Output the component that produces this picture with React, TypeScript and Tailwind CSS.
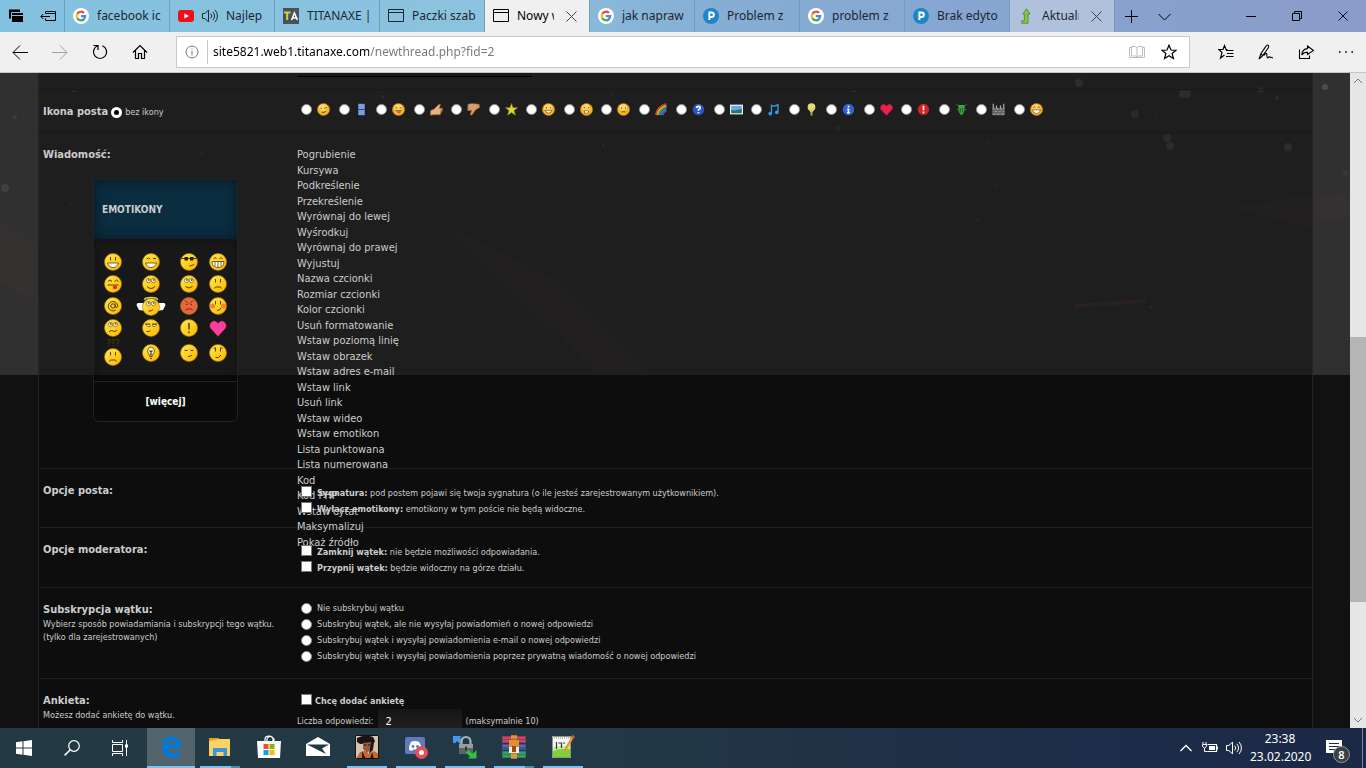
import type { ReactNode } from 'react';

type Box = { children: ReactNode; className?: string; box?: string };

function Svg({ children, className = 'size-4', box = '0 0 16 16' }: Box) {
  return (
    <svg viewBox={box} className={`${className} shrink-0`} fill="none" stroke="currentColor" aria-hidden="true">
      {children}
    </svg>
  );
}

/* ---------- browser icons ---------- */

function GoogleIcon() {
  return (
    <Svg>
      <circle cx="8" cy="8" r="8" fill="#fff" stroke="none" />
      <g strokeWidth="2.2">
        <path d="M4.3 5.8A4.3 4.3 0 0 1 11 4.9" stroke="#ea4335" />
        <path d="M4.3 10.2a4.4 4.4 0 0 1 0-4.4" stroke="#fbbc05" />
        <path d="M11 11.1a4.3 4.3 0 0 1-6.7-.9" stroke="#34a853" />
        <path d="M8 8.1h4.2a4.3 4.3 0 0 1-1.4 3.1" stroke="#4285f4" />
      </g>
    </Svg>
  );
}

function PIcon() {
  return (
    <Svg>
      <circle cx="8" cy="8" r="8" fill="#1d86c8" stroke="none" />
      <path d="M6.4 12V4.6h2.2a2.1 2.1 0 0 1 0 4.4H6.4" stroke="#fff" strokeWidth="2" />
    </Svg>
  );
}

function YoutubeIcon() {
  return (
    <Svg>
      <rect x="0" y="2" width="16" height="12" rx="3" fill="#f00f18" stroke="none" />
      <path d="M6.4 5.4v5.2L11 8z" fill="#fff" stroke="none" />
    </Svg>
  );
}

function TitanIcon() {
  return (
    <Svg>
      <rect width="16" height="16" fill="#45545c" stroke="none" />
      <path d="M1 4.5h6.5M4.2 4.5V12" stroke="#d8cf3c" strokeWidth="2" />
      <path d="M8.600 12l2.800-7 3 7M10 10h2.800" stroke="#fff" strokeWidth="1.600" />
    </Svg>
  );
}

function PageIcon() {
  return (
    <Svg>
      <path d="M.5 1.500h15v12H.5zM.5 4.500h15" />
    </Svg>
  );
}

function ArrowFavicon() {
  return (
    <Svg>
      <path d="M8.500.8L12 6h-2v9.200H3.800v-2.400h2.600V6H4.800z" fill="#8bc541" stroke="#4f7f2c" strokeWidth=".8" />
    </Svg>
  );
}

function SpeakerIcon({ className = 'size-4' }: { className?: string }) {
  return (
    <Svg className={className}>
      <path d="M.5 5.500h2.300L6.500 2.200v11.600L2.800 10.500H.5zM8.600 5.600a3.400 3.400 0 0 1 0 4.800M10.800 3.800a6 6 0 0 1 0 8.400M13 2a8.600 8.600 0 0 1 0 12" />
    </Svg>
  );
}

function CloseIcon({ className = 'size-[11px]' }: { className?: string }) {
  return (
    <Svg className={className} box="0 0 11 11">
      <path d="M.5.5l10 10M10.500.5l-10 10" />
    </Svg>
  );
}

/* ---------- tabs ---------- */

type Tab = { title: string; icon: ReactNode; state?: 'active' | 'hover'; sound?: boolean };

const tabs: Tab[] = [
  { title: 'facebook icon', icon: <GoogleIcon /> },
  { title: 'Najlep', icon: <YoutubeIcon />, sound: true },
  { title: 'TITANAXE | ', icon: <TitanIcon /> },
  { title: 'Paczki szab', icon: <PageIcon /> },
  { title: 'Nowy wątek', icon: <PageIcon />, state: 'active' },
  { title: 'jak napraw', icon: <GoogleIcon /> },
  { title: 'Problem z', icon: <PIcon /> },
  { title: 'problem z', icon: <GoogleIcon /> },
  { title: 'Brak edyto', icon: <PIcon /> },
  { title: 'Aktualności', icon: <ArrowFavicon />, state: 'hover' },
];

function TabStrip() {
  return (
    <div className="flex h-8 shrink-0 bg-[linear-gradient(90deg,#83c1e0_0%,#8cc3de_35%,#86aed4_52%,#86a4d0_75%,#8b9bc9_100%)] text-[#1b2733]">
      <div className="flex w-16 shrink-0 items-center gap-4 pl-2 text-black">
        <button aria-label="Odłożone karty">
          <Svg>
            <path d="M1 1.500h11v9H1z" fill="#000" stroke="none" />
            <path d="M3.500 4.500h12v10h-12z" fill="#000" stroke="#84c0df" />
            <path d="M4 7.500h11" stroke="#84c0df" />
          </Svg>
        </button>
        <button aria-label="Odłóż karty">
          <Svg>
            <path d="M5.500 5.500V3.500h10v9h-10v-2M5.500 5.500h10M10 8.500H.8M3.300 6L.8 8.500l2.500 2.500" />
          </Svg>
        </button>
      </div>
      {tabs.map((tab) => (
        <div
          key={tab.title}
          className={`flex w-[105px] shrink-0 items-center gap-2 border-l border-[#6f9dbd] pl-2 pr-2 text-[12px] ${
            tab.state === 'active' ? 'bg-[#f0f0f0] text-black' : tab.state === 'hover' ? 'bg-[#b0c1dd]' : ''
          }`}
        >
          {tab.icon}
          {tab.sound && <SpeakerIcon />}
          <button className="min-w-0 flex-1 overflow-hidden whitespace-nowrap text-left">{tab.title}</button>
          {tab.state && (
            <button aria-label="Zamknij kartę" className="mx-1 text-[#444]">
              <CloseIcon />
            </button>
          )}
        </div>
      ))}
      <div className="flex flex-1 items-center justify-between border-l border-[#7d92ba] text-black">
        <div className="flex items-center gap-5 pl-2.5">
          <button aria-label="Nowa karta">
            <Svg className="size-[13px]" box="0 0 13 13">
              <path d="M6.500 0v13M0 6.500h13" />
            </Svg>
          </button>
          <button aria-label="Podgląd kart">
            <Svg className="size-[13px]" box="0 0 13 13">
              <path d="M.5 4l6 6 6-6" />
            </Svg>
          </button>
        </div>
        <div className="flex items-center gap-9 pr-[18px]">
          <button aria-label="Minimalizuj">
            <Svg className="size-[10px]" box="0 0 10 10">
              <path d="M0 5.500h10" />
            </Svg>
          </button>
          <button aria-label="Przywróć">
            <Svg className="size-[10px]" box="0 0 10 10">
              <path d="M.5 2.500h7v7h-7zM2.500 2.500v-2h7v7h-2" />
            </Svg>
          </button>
          <button aria-label="Zamknij">
            <CloseIcon className="size-[10px]" />
          </button>
        </div>
      </div>
    </div>
  );
}

function Toolbar() {
  return (
    <div className="flex h-[41px] shrink-0 items-center border-b border-[#c4c4c4] bg-[#f0f0f0] text-black">
      <div className="flex w-[176px] shrink-0 items-center gap-6 pl-3">
        <button aria-label="Wstecz">
          <Svg><path d="M16 8.500H1M8 1.500l-7 7 7 7" /></Svg>
        </button>
        <button aria-label="Dalej" className="text-[#a0a0a0]">
          <Svg><path d="M0 8.500h15M8 1.500l7 7-7 7" /></Svg>
        </button>
        <button aria-label="Odśwież">
          <Svg><path d="M5.500 1.800A6.600 6.600 0 1 0 10.300 1.700M1.500 1.500h4.500v4.500" strokeWidth="1.200" /></Svg>
        </button>
        <button aria-label="Strona główna">
          <Svg><path d="M1 8.500l7-7 7 7M3.500 6.500v8h3v-5h3v5h3v-8" strokeWidth="1.200" /></Svg>
        </button>
      </div>
      <div className="flex h-8 flex-1 items-center border border-[#c8c8c8] bg-white pl-2 pr-3">
        <Svg className="size-[14px] text-[#777]" box="0 0 14 14">
          <circle cx="7" cy="7" r="6" />
          <path d="M7 6v4.500M7 3.500v1.200" />
        </Svg>
        <div className="ml-2 h-6 w-px bg-[#c4c4c4]" />
        <input
          type="text"
          aria-label="Adres"
          defaultValue="site5821.web1.titanaxe.com/newthread.php?fid=2"
          className="ml-[5px] min-w-0 flex-1 bg-[linear-gradient(90deg,#000_156px,#767676_156px)] bg-clip-text text-[12px] text-transparent outline-none"
        />
        <button aria-label="Widok do czytania" className="text-[#bdbdbd]">
          <Svg><path d="M2.500 3.500h-2v10h15v-10h-2M2.500 2.500h4l1.500 1 1.500-1h4v9.500h-4l-1.500 1-1.500-1h-4zM8 3.500v9.500" /></Svg>
        </button>
        <button aria-label="Dodaj do ulubionych" className="ml-4">
          <Svg><path d="M8 1.200l2 4.800 5 .3-3.900 3.200 1.300 5L8 11.800l-4.400 2.700 1.300-5L1 6.300 6 6z" strokeWidth="1.200" /></Svg>
        </button>
      </div>
      <div className="flex items-center gap-6 pl-7 pr-3">
        <button aria-label="Ulubione">
          <Svg><path d="M9.500 5.500H8L6.500 1.500 5 5.500H.8l3.200 3-1.500 5.500 4-3M8 6.500h7.500M9 9.500h6.500M8 12.500h7.500" strokeWidth="1.100" /></Svg>
        </button>
        <button aria-label="Dodaj notatki">
          <Svg><path d="M1 15L3 9.500 8 2.200q1.800-2 2.500-.5T9.500 5L4.500 11.800 1 15M3 9.500l1.500 2.300M6 11.500q3-4 2.800-1t1 3.500q1-1.500 2.200-1t3 1" strokeWidth="1.100" /></Svg>
        </button>
        <button aria-label="Udostępnij">
          <Svg><path d="M1.500 5.500v9h10v-3M9.500 2l6 4.500-6 4V8.200Q5.500 8 3.800 11 4 5 9.500 4.600z" strokeWidth="1.100" /></Svg>
        </button>
        <button aria-label="Więcej">
          <Svg>
            <path d="M1 8h1.600M7.200 8h1.600M13.400 8H15" strokeWidth="1.600" />
          </Svg>
        </button>
      </div>
    </div>
  );
}

/* ---------- post icons ---------- */

const radioClass =
  'size-[11px] shrink-0 appearance-none rounded-full border border-[#8a8a8a] bg-white checked:border-[3px] checked:border-white checked:bg-black';
const checkClass =
  'mb-1 size-[11px] shrink-0 appearance-none border border-[#767676] bg-white checked:bg-[#0078d7]';

function Gold({ children }: { children: ReactNode }) {
  return (
    <>
      <circle cx="8" cy="8" r="7.500" fill="#f5b52e" stroke="#b87710" strokeWidth=".8" />
      <ellipse cx="7.500" cy="5.500" rx="5" ry="4" fill="#fbd66b" stroke="none" />
      <g stroke="#6b3f08" strokeWidth="1.100">{children}</g>
    </>
  );
}

function Badge({ color, mark }: { color: string; mark: string }) {
  return (
    <>
      <circle cx="8" cy="8" r="7" fill={color} stroke="none" />
      <path d={mark} stroke="#fff" strokeWidth="2" />
    </>
  );
}

const postIcons: { name: string; art: ReactNode }[] = [
  { name: 'Mrugnięcie', art: <Gold><path d="M5 6v1.500M9 6.500l3-1M6 11.500q3 1 5-1.500" /></Gold> },
  { name: 'Film', art: <><path d="M2.500 1v14M13.500 1v14" stroke="#141c30" strokeWidth="3" strokeDasharray="2 1" /><path d="M4 1h8v14H4z" fill="#7c9ddc" stroke="none" /><path d="M4 8h8" stroke="#26355e" /></> },
  { name: 'Język', art: <Gold><path d="M4.500 6h2M9.500 6h2M4.500 9.500h7" /><path d="M6.500 10h4v2q-2 2-4 0z" fill="#e75454" stroke="none" /></Gold> },
  { name: 'Kciuk w górę', art: <path d="M.5 9.500l5-2.500L11 1.500 13 2l-1.500 4.500h4v2h-2.500l2 .5v1.500l-2 .2 1 1.300-1.500 1 .5 1.500H5l-4.500.5z" fill="#e9b27d" stroke="#8e5a34" strokeWidth=".7" /> },
  { name: 'Kciuk w dół', art: <path d="M1 1.500L6 .5l9 1 .5 4-5 3L6 15l-2-.5 1.500-5.500-4.500.5L.5 7l1.500-.5L.3 5l1-1z" fill="#d99b6c" stroke="#8e5a34" strokeWidth=".7" /> },
  { name: 'Gwiazda', art: <path d="M8 .5l1.800 5.300H15.500l-4.500 3.400 1.800 5.800L8 11.600 3.200 15 5 9.200.5 5.800h5.700z" fill="#dcdc28" stroke="#8f8a16" strokeWidth=".7" /> },
  { name: 'Uśmiech', art: <Gold><path d="M5.500 5v1.500M10.500 5v1.500" /><path d="M4 9h8q-1 3.500-4 3.500T4 9z" fill="#fff" strokeWidth=".8" /></Gold> },
  { name: 'Szok', art: <Gold><path d="M4.500 5l2 1.500M11.500 5l-2 1.500" /><path d="M5.500 9.500h5v3h-5z" fill="#fff" strokeWidth=".8" /></Gold> },
  { name: 'Smutny', art: <Gold><path d="M5.500 5.500v1.500M10.500 5.500v1.500M5.500 11q2.500-.8 5 0" /></Gold> },
  { name: 'Tęcza', art: <g strokeWidth="1.900"><path d="M1 15Q2 4 14 1" stroke="#d63a2f" /><path d="M3 15Q4 6 14 3" stroke="#e9b92c" /><path d="M5 15Q6 8 14 5" stroke="#3dae4a" /><path d="M7 15Q8 10 14 7" stroke="#3c79d8" /><path d="M9 15q1-3 5-6" stroke="#8249b5" /></g> },
  { name: 'Pytanie', art: <Badge color="#2c54cf" mark="M5.800 6.200q0-2 2.200-2t2.200 1.800Q10.200 7.500 8 8v1.500M8 11v1.500" /> },
  { name: 'Obraz', art: <><rect x="0" y="2" width="16" height="12" fill="#eef2f4" stroke="none" /><path d="M1.500 3.500h13v5h-13z" fill="#62aae8" stroke="none" /><path d="M1.500 8q5 2 13-1v5.500h-13z" fill="#2e6e72" stroke="none" /></> },
  { name: 'Muzyka', art: <><path d="M5.500 12.500V3q3 2 8-1v9" stroke="#2e9ae8" strokeWidth="1.700" /><circle cx="4" cy="13" r="2.300" fill="#2e9ae8" stroke="none" /><circle cx="12" cy="11.500" r="2.300" fill="#2e9ae8" stroke="none" /></> },
  { name: 'Żarówka', art: <><circle cx="8" cy="5" r="4.800" fill="#e7d97a" stroke="none" /><path d="M5 8h6l-1.500 3.500h-3z" fill="#d9cb64" stroke="none" /><path d="M8 11v4.500" stroke="#a8a05a" strokeWidth="2.500" /></> },
  { name: 'Informacja', art: <Badge color="#3560d6" mark="M8 3.500v2M8 7v5.500M6.500 7.800H8M6.300 12h3.400" /> },
  { name: 'Serce', art: <path d="M8 15.500L.5 7.500C-1 3.500 4.500-1.500 8 4c3.500-5.500 9-.5 7.500 3.500z" fill="#e5234a" stroke="#9c1030" strokeWidth=".6" /> },
  { name: 'Wykrzyknik', art: <Badge color="#d02424" mark="M8 3.500v5.500M8 10.500v2" /> },
  { name: 'Robak', art: <><path d="M4 2.500h8l-.5 8.500L8 15.500 4.500 11z" fill="#38a846" stroke="none" /><path d="M1.500 1.500l3 2.500M14.500 1.500l-3 2.500M2 8l3-.5M14 8l-3-.5" stroke="#2b8a38" /><path d="M6.500 6v6M9.500 6v6" stroke="#164a1e" /></> },
  { name: 'Mur', art: <><path d="M.5 6h15v9H.5z" fill="#8c8c8c" stroke="none" /><path d="M1.500 1v5M5.500 3v3M10.500 3v3M14.500 1v5" stroke="#a9a9a9" strokeWidth="1.500" /><path d="M0 9h16M0 12h16M4 6v3M9 6v3M13 6v3M2 9v3M7 9v3M12 9v3M5 12v3M10 12v3" stroke="#444" strokeWidth=".8" /></> },
  { name: 'Szeroki uśmiech', art: <Gold><path d="M4 5.500q1.200-1.500 2.500 0M9.500 5.500q1.200-1.500 2.500 0" /><path d="M3 8.500h10q-1 4.500-5 4.500T3 8.500z" fill="#fff" strokeWidth=".8" /></Gold> },
];

/* ---------- emoticons ---------- */

function Face({ children, color = 'url(#face)' }: { children: ReactNode; color?: string }) {
  return (
    <>
      <circle cx="9" cy="9" r="8.500" fill={color} stroke="#a87c0a" strokeWidth=".6" />
      <g stroke="#5b4204">{children}</g>
    </>
  );
}

const eyes = 'M6.500 4v3.500M11.500 4v3.500';
const roundEyes = (
  <g fill="#fff" strokeWidth=".6">
    <circle cx="6.500" cy="5.500" r="2.100" />
    <circle cx="11.500" cy="5.500" r="2.100" />
    <path d="M6 5h1.500M11 5h1.500" strokeWidth="1.300" />
  </g>
);

const emoticons: { name: string; art: ReactNode; kind?: 'angel' | 'confused' }[] = [
  { name: 'uśmiech', art: <Face><path d={eyes} /><path d="M3.500 10h11q-1.500 4.500-5.500 4.500t-5.500-4.500z" fill="#fff" strokeWidth=".8" /></Face> },
  { name: 'oczko', art: <Face><path d="M4.500 6l2-1 1.500 1M11 5.500h3" /><path d="M3.500 10h11q-1.500 4.500-5.500 4.500t-5.500-4.500z" fill="#fff" strokeWidth=".8" /></Face> },
  { name: 'luz', art: <Face><path d="M0 5.500h18M9.500 13q3 0 4.500-2" /><path d="M4.500 4H8v3.500H4.500zM10 4h3.500v3.500H10z" fill="#28220a" stroke="none" /></Face> },
  { name: 'szeroki uśmiech', art: <Face><path d="M4.500 5.500q1.500-1.500 3 0M10.500 5.500q1.500-1.500 3 0" /><path d="M3 8.500h12q0 6-6 6t-6-6zM6 8.500v5M9 8.500v6M12 8.500v5" fill="#fff" strokeWidth=".8" /></Face> },
  { name: 'język', art: <Face><path d="M4 6.500l2-1.500 2 1.500M10.500 6.500l2-1.500 2 1.500M3.500 10h11" /><path d="M9 10.500h4v3q-2 1.500-4 0z" fill="#dc3838" stroke="none" /></Face> },
  { name: 'przewraca oczami', art: <Face>{roundEyes}<path d="M5 11.500q4 4 8 0" /></Face> },
  { name: 'nieśmiały', art: <Face>{roundEyes}<path d="M5.500 11.500q3.500 3 7 0" /></Face> },
  { name: 'smutny', art: <Face><path d={eyes} /><path d="M5.500 13.500l1-1.500h5l1 1.500" /></Face> },
  { name: 'małpa', art: <Face><circle cx="9" cy="9" r="2.200" /><path d="M11.200 6.500v3.500q2 1.500 2.500-1A4.700 4.700 0 1 0 11.800 13" /></Face> },
  {
    name: 'anioł',
    kind: 'angel',
    art: (
      <>
        <path d="M7 7H1.500L.5 9l1.500 3 1 2 3 .5h2zM23 7h5.500l1 2-1.500 3-1 2-3 .5h-2z" fill="#fff" stroke="none" />
        <g transform="translate(6 2)"><Face>{roundEyes}<path d="M6.500 13q3 .5 4.500-1.500" /></Face></g>
        <path d="M8.500 4q0-2.500 6.500-2.500T21.500 4" stroke="#e0c35e" strokeWidth="1.600" />
      </>
    ),
  },
  { name: 'zły', art: <Face color="#e8663f"><g stroke="#8c2412"><path d="M5 3.500l3 3M13 3.500l-3 3M6 7.500h1.500M10.500 7.500H12M5.500 13.500l1-1.500h5l1 1.500" /></g></Face> },
  { name: 'zawstydzony', art: <Face><circle cx="3.500" cy="9" r="2.500" fill="#f5842a" stroke="none" /><circle cx="14.500" cy="9" r="2.500" fill="#f5842a" stroke="none" /><path d={eyes} /><path d="M8 13.500q3 0 4-2.500" /></Face> },
  { name: 'zmieszany', art: <Face>{roundEyes}<path d="M5 13q2-2.500 4-1t4-1" /></Face> },
  { name: 'podejrzliwy', art: <Face><path d="M3 5h5M10 5h5" /><path d="M4 5.500h4v2H5.500zM10.500 5.500h4l-1.500 2h-2z" fill="#fff" strokeWidth=".7" /><path d="M4.500 12.500h3l1-1" /></Face> },
  { name: 'wykrzyknik', art: <Face><path d="M9 4v6.500M9 12.500v1.600" strokeWidth="1.600" /></Face> },
  { name: 'serce', art: <path d="M9 17.500L1.300 9C-1 4.500 5-1.500 9 4.500c4-6 10 0 7.700 4.500z" fill="#ff3d9e" stroke="#8f1d58" strokeWidth=".5" /> },
  { name: 'pytanie', kind: 'confused', art: <Face><path d={eyes} /><path d="M5.500 13.500l1-1.500h5l1 1.500" /></Face> },
  { name: 'pomysł', art: <Face><path d="M9 3a4 4 0 0 1 2 7v1H7v-1a4 4 0 0 1 2-7z" fill="#fffad0" strokeWidth=".8" /><path d="M7.500 6.500L9 8l1.500-1.500M9 8v3M7.500 12.500h3M8 14.500h2" strokeWidth="1.200" /></Face> },
  { name: 'śpiący', art: <Face><path d="M4.500 6q1.500 1.500 3 0M10.500 6q1.500 1.500 3 0M8 12.500q2.500 0 4-1.500" /></Face> },
  { name: 'niezdecydowany', art: <Face><path d={eyes} /><path d="M4.500 4.500l2-1M13.500 4.500l-2-1M6.500 13.500h3l2.500-2.500" /></Face> },
];

function EmoticonPanel() {
  return (
    <div className="ml-[50px] mt-4 w-[145px] rounded-b-md border border-[#222] bg-black/20">
      <div className="flex h-[59px] items-center bg-[#0b2d40] px-2 text-[10px] font-bold text-[#c8ccce] shadow-[inset_0_0_14px_rgba(0,0,0,0.45)]">
        EMOTIKONY
      </div>
      <div className="grid h-[142px] grid-cols-[38px_38px_38px_20px] grid-rows-[22px_22px_22px_22px_28px] place-items-center pt-3 shadow-[inset_0_0_10px_rgba(0,0,0,0.3)]">
        {emoticons.map((e) => (
          <button key={e.name} aria-label={e.name} className="flex flex-col items-center">
            {e.kind === 'confused' && <span className="h-2 text-[9px] leading-[6px] text-[#54400e]">???</span>}
            {e.kind === 'angel' ? (
              <Svg className="h-[20px] w-[30px]" box="0 0 30 20">{e.art}</Svg>
            ) : (
              <Svg className="size-[18px]" box="0 0 18 18">{e.art}</Svg>
            )}
          </button>
        ))}
      </div>
      <div className="flex h-10 items-center justify-center border-t border-[#222] text-[10px] font-bold text-white">
        <a href="#wiecej">[więcej]</a>
      </div>
    </div>
  );
}

/* ---------- form ---------- */

const editorCommands = [
  'Pogrubienie', 'Kursywa', 'Podkreślenie', 'Przekreślenie', 'Wyrównaj do lewej', 'Wyśrodkuj',
  'Wyrównaj do prawej', 'Wyjustuj', 'Nazwa czcionki', 'Rozmiar czcionki', 'Kolor czcionki',
  'Usuń formatowanie', 'Wstaw poziomą linię', 'Wstaw obrazek', 'Wstaw adres e-mail', 'Wstaw link',
  'Usuń link', 'Wstaw wideo', 'Wstaw emotikon', 'Lista punktowana', 'Lista numerowana', 'Kod',
  'Kod PHP', 'Wstaw cytat', 'Maksymalizuj', 'Pokaż źródło',
];

const subscriptions = [
  'Nie subskrybuj wątku',
  'Subskrybuj wątek, ale nie wysyłaj powiadomień o nowej odpowiedzi',
  'Subskrybuj wątek i wysyłaj powiadomienia e-mail o nowej odpowiedzi',
  'Subskrybuj wątek i wysyłaj powiadomienia poprzez prywatną wiadomość o nowej odpowiedzi',
];

function Row({
  label,
  height,
  line = 'border-[#1f1f1f]',
  children,
}: {
  label: ReactNode;
  height: string;
  line?: string;
  children: ReactNode;
}) {
  return (
    <div className={`grid grid-cols-[254px_1fr] border-t px-1 ${line} ${height}`}>
      <div className="pt-[14px] text-[11px] leading-4">{label}</div>
      <div className="text-[9px] leading-4">{children}</div>
    </div>
  );
}

function Check({ title, text }: { title: string; text: string }) {
  return (
    <label className="flex w-fit items-center gap-[5px] pl-1">
      <input type="checkbox" className={checkClass} />
      <span><b>{title}</b> {text}</span>
    </label>
  );
}

const sparks = [
  [15, 44, 2, '#4a3a20'], [74, 18, 2, '#30281c'], [383, 24, 2, '#33291b'], [854, 18, 2, '#33291b'], [611, 22, 2, '#1f262c'],
  [1079, 10, 4, '#2c2c2c'], [1183, 21, 4, '#2c2c2c'], [1187, 21, 4, '#2c2c2c'], [1135, 41, 4, '#2a2a2a'], [1167, 65, 4, '#2c2c2c'],
  [1170, 73, 4, '#2c2c2c'], [1288, 74, 4, '#2c2c2c'], [1261, 17, 3, '#282b29'], [1277, 25, 2, '#282b29'], [1325, 14, 3, '#454f51'],
  [603, 72, 1, '#3a2b1a'], [1155, 41, 1, '#3b2818'], [202, 80, 2, '#2a2219'], [989, 69, 2, '#2c2119'], [996, 112, 2, '#2a201a'],
  [978, 146, 2, '#2c2318'], [612, 147, 2, '#2a1d1b'], [503, 220, 2, '#291f1a'], [856, 238, 2, '#261f1a'], [1151, 234, 2, '#35221a'],
  [5, 115, 4, '#3b4142'], [70, 130, 2, '#29231e'], [838, 55, 3, '#222525'], [1345, 100, 3, '#393636'],
] as const;

function Backdrop() {
  return (
    <svg className="absolute inset-x-0 top-0 h-[302px] w-full" viewBox="0 0 1350 302" preserveAspectRatio="none" fill="none" aria-hidden="true">
      <path d="M1313 125l37-5v25h-37zM0 150l38 20v60l-38-20z" fill="#353131" />
      <path d="M1228 135l84-14v34zM440 150l120 60 90 92h-50L480 190z" fill="#211f1f" />
      {sparks.map(([x, y, r, color]) => (
        <circle key={`${x}-${y}`} cx={x} cy={y} r={r} fill={color} />
      ))}
      <path d="M1074 231l72-5v4l-72 5z" fill="#282021" />
      <g stroke="#221f1f">
        <path d="M1060 302q-55-35-60-58t22-28M990 302q-35-25-40-40M960 168l90-20M1040 145l118-20M1166 254l100-6M160 85l-5 20 90-40 95 15-60 10M400 150L560 302M470 140L640 302M350 120l300-20 420 90" />
      </g>
    </svg>
  );
}

function Forum() {
  return (
    <main className="relative flex-1 overflow-hidden bg-[linear-gradient(#303030_302px,#111_302px)] font-['DejaVu_Sans_Condensed','DejaVu_Sans',sans-serif] text-[#ccc]">
      <div className="ml-[38px] mr-[37px] h-full border-x border-[#252525] bg-[linear-gradient(#1e1e1e_302px,#0d0d0d_302px)]">
        <Backdrop />
        <form className="relative">
          <div className="h-4 px-1">
            <div className="ml-[254px] h-1 w-[235px] border-b border-black bg-[#1a1a1a]" />
          </div>
          <Row
            height="h-[43px]"
            line="border-[#191919]"
            label={
              <div className="flex items-center gap-[3px]">
                <b>Ikona posta</b>
                <label className="flex items-center gap-[3px] text-[9px]">
                  <input type="radio" name="icon" defaultChecked className={radioClass} />
                  bez ikony
                </label>
              </div>
            }
          >
            <div className="grid w-[754px] grid-cols-20 pl-1 pt-[13px]">
              {postIcons.map((icon) => (
                <label key={icon.name} className="flex items-center gap-[5px]">
                  <input type="radio" name="icon" aria-label={icon.name} className={radioClass} />
                  <Svg className="size-[13px]">{icon.art}</Svg>
                </label>
              ))}
            </div>
          </Row>
          <Row height="h-[336px]" line="border-[#191919]" label={<><b>Wiadomość:</b><EmoticonPanel /></>}>
            <ul className="mt-[14px] flex h-[403px] flex-col justify-between text-[11px] leading-[15px]">
              {editorCommands.map((c) => (
                <li key={c}>{c}</li>
              ))}
            </ul>
          </Row>
          <Row height="h-[59px]" label={<b>Opcje posta:</b>}>
            <div className="pt-4">
              <Check title="Sygnatura:" text="pod postem pojawi się twoja sygnatura (o ile jesteś zarejestrowanym użytkownikiem)." />
              <Check title="Wyłącz emotikony:" text="emotikony w tym poście nie będą widoczne." />
            </div>
          </Row>
          <Row height="h-[60px]" label={<b>Opcje moderatora:</b>}>
            <div className="pt-4">
              <Check title="Zamknij wątek:" text="nie będzie możliwości odpowiadania." />
              <Check title="Przypnij wątek:" text="będzie widoczny na górze działu." />
            </div>
          </Row>
          <Row
            height="h-[91px]"
            label={
              <>
                <b>Subskrypcja wątku:</b>
                <p className="whitespace-nowrap text-[9px] leading-[13px]">
                  Wybierz sposób powiadamiania i subskrypcji tego wątku.
                  <br />
                  (tylko dla zarejestrowanych)
                </p>
              </>
            }
          >
            <div className="pt-3">
              {subscriptions.map((s) => (
                <label key={s} className="flex w-fit items-center gap-[5px] pl-1">
                  <input type="radio" name="subscription" className={radioClass} />
                  {s}
                </label>
              ))}
            </div>
          </Row>
          <Row
            height="h-[91px]"
            label={
              <>
                <b>Ankieta:</b>
                <p className="text-[9px] leading-[13px]">Możesz dodać ankietę do wątku.</p>
              </>
            }
          >
            <div className="pt-[14px]">
              <label className="flex w-fit items-center gap-[3px] pl-1 font-bold">
                <input type="checkbox" className={checkClass} />
                Chcę dodać ankietę
              </label>
              <div className="flex items-center gap-1">
                <label htmlFor="answers">Liczba odpowiedzi:</label>
                <input
                  id="answers"
                  type="text"
                  defaultValue="2"
                  className="h-6 w-[84px] bg-[linear-gradient(#161616,#222)] px-2 text-[11px] text-white outline-none"
                />
                (maksymalnie 10)
              </div>
            </div>
          </Row>
        </form>
      </div>
    </main>
  );
}

function Scrollbar() {
  return (
    <div className="flex w-4 shrink-0 flex-col bg-[#e6e6e6] text-[#777]" aria-hidden="true">
      <div className="flex h-4 items-center justify-center">
        <Svg className="size-2" box="0 0 8 8"><path d="M0 6l4-4 4 4" /></Svg>
      </div>
      <div className="flex flex-1 flex-col">
        <div className="flex-[248]" />
        <div className="flex-[264] bg-[#b5b5b5]" />
        <div className="flex-[110]" />
      </div>
      <div className="flex h-4 items-center justify-center">
        <Svg className="size-2" box="0 0 8 8"><path d="M0 2l4 4 4-4" /></Svg>
      </div>
    </div>
  );
}

/* ---------- taskbar ---------- */

type App = { name: string; art: ReactNode; mark?: 'active' | 'open' | 'many' };

const apps: App[] = [
  {
    name: 'Microsoft Edge',
    mark: 'active',
    art: <path d="M1.500 11C3 4.500 7.500 1.500 12.500 1.500c6.500 0 9.500 4.500 9.500 9.500v2.500H8.500c.3 3.500 3.500 4.800 6.500 4.800 2.300 0 4.300-.6 6-1.700v4.700c-2 1.200-4.500 1.700-7.300 1.700C8 23 3.500 19.500 3.500 14c0-3.500 1.800-6 4.600-7.500C5.500 7 3 8.500 1.500 11zM8.700 9.500h7.600c0-2.500-1.500-4-3.600-4-2.300 0-3.700 1.700-4 4z" fill="#0078d7" fillRule="evenodd" stroke="none" />,
  },
  {
    name: 'Eksplorator plików',
    mark: 'many',
    art: <g stroke="none"><path d="M1 3h10v4H1z" fill="#e2a10e" /><path d="M1 6l10-2h11v17H1z" fill="#fbd263" /><path d="M5 21v-8h14v8h-3.500v-4h-7v4z" fill="#3a97dd" /></g>,
  },
  {
    name: 'Microsoft Store',
    art: <g stroke="none"><path d="M0 6h24l-1 17H1z" fill="#fff" /><path d="M8 6V4q0-3 4-3t4 3v2M10 6V3.500Q13-1 17 4v2" fill="none" stroke="#fff" strokeWidth="1.200" /><path d="M6.500 9H11.500v5h-5z" fill="#f25022" /><path d="M12.500 9h5v5h-5z" fill="#7fba00" /><path d="M6.500 15h5v5h-5z" fill="#00a4ef" /><path d="M12.500 15h5v5h-5z" fill="#ffb900" /></g>,
  },
  {
    name: 'Poczta',
    art: <path d="M0 9l12-7 12 7v12H0zM1 9.500l11 5.500 8 4-4-5.500 7-4z" fill="#fff" fillRule="evenodd" stroke="none" />,
  },
  {
    name: 'San Andreas Multiplayer',
    mark: 'open',
    art: <g stroke="none"><path d="M0 0h24v24H0z" fill="#d8c3b1" /><path d="M2 3Q10-1 18 2l2 4-1 2-14 1-3-2z" fill="#191411" /><path d="M8 8l8-1v7l-4 4-4-4z" fill="#9c5b36" /><path d="M16 6l3 1-1 8-4 4 1-6z" fill="#241a15" /><path d="M1 24l4-7 5-1 4 3 5-3 5 3v5z" fill="#c46a32" /><path d="M7 16l4 8H7zM17 17l-2 7h4z" fill="#2b1b13" /><path d="M9 10h2.500M13 10h2" stroke="#1a0f09" /><path d="M.5.5h23v23H.5z" fill="none" stroke="#15110e" /></g>,
  },
  {
    name: 'Discord',
    mark: 'open',
    art: <g stroke="none"><path d="M3 2h16q2 0 2 2v17l-3-2H3q-2 0-2-2V4q0-2 2-2z" fill="#6379bd" /><path d="M7 7q4-2 8 0 3 4 2 8l-3 1-1-1.500H9L8 16l-3-1q0-5 2-8z" fill="#fff" /><circle cx="9" cy="11.500" r="1.400" fill="#6379bd" /><circle cx="13.500" cy="11.500" r="1.400" fill="#6379bd" /><circle cx="17.500" cy="17.500" r="6.500" fill="#e4505a" /><circle cx="17.500" cy="17.500" r="2.500" fill="#fff" /></g>,
  },
  {
    name: 'WinSCP',
    mark: 'open',
    art: <g stroke="none"><path d="M0 1h8.500L7 3l3 3-3 3-3-3-2 2.500-2-1z" fill="#3f9af0" /><path d="M8.500 10V7q0-5 4.500-5t4.500 5v3" fill="none" stroke="#a9afb2" strokeWidth="2.200" /><path d="M6 9h14v10H6z" fill="#5f6567" /><path d="M6 9h14v4H6z" fill="#989ea0" /><path d="M12 11.500h2v4h-2z" fill="#333" /><path d="M23.500 23.500H15l2-2-4-4 2.500-2.500 4 4 4-4z" fill="#2fc33c" /></g>,
  },
  {
    name: 'WinRAR',
    mark: 'many',
    art: <g stroke="none"><path d="M0 1h24v7H0z" fill="#b32f52" /><path d="M0 9h24v6H0z" fill="#3f4e9d" /><path d="M0 16h24v7H0z" fill="#1e8a4e" /><path d="M1 3h22M1 6h22M1 11h22M1 18h22M1 21h22" stroke="#d9d3cf" strokeOpacity=".4" /><path d="M9 0h6v24H9z" fill="#c8721e" /><path d="M7 5h10v7H7z" fill="#e0912e" /><path d="M7 12h10v6H7z" fill="#f5ece0" /><path d="M10 11h4v6h-4z" fill="#9a4c14" /><path d="M9 2h6M9 20h6M9 22h6" stroke="#f0c36a" /></g>,
  },
  {
    name: 'Notatnik',
    mark: 'open',
    art: <g stroke="none"><path d="M1 1h19v22H1z" fill="#f6f8f2" /><path d="M2 15q9-3 17-2v9H2z" fill="#7ad437" /><path d="M2 12q9-2 17-1v3q-9-1-17 2z" fill="#c9ecac" /><path d="M1.500 1.500h18v21h-18z" fill="none" stroke="#8b9488" /><path d="M3 3h15" stroke="#888" strokeDasharray="1 1" /><path d="M5.500 7v7M7.500 8h3v5M12 8h2" fill="none" stroke="#333" strokeWidth="1.200" /><path d="M20.500 1.500l2 1.500-8 14-2.500 2 .5-3.500z" fill="#e59a2b" /><path d="M20 1.500l1.500-1.500L24 1.500 23 3.500z" fill="#dc5348" /></g>,
  },
];

function Taskbar() {
  return (
    <footer className="flex h-10 shrink-0 bg-[linear-gradient(90deg,#233a44_0%,#223845_45%,#1d2c48_80%,#1b2946_100%)] text-white">
      <button aria-label="Start" className="flex w-12 shrink-0 items-center justify-center">
        <Svg><path d="M0 2.200l6.500-.9v6.200H0zM7.500 1.200L16 0v7.500H7.500zM0 8.500h6.500v6.200L0 13.800zM7.500 8.500H16V16l-8.500-1.200z" fill="#fff" stroke="none" /></Svg>
      </button>
      <button aria-label="Wyszukaj" className="flex w-12 shrink-0 items-center justify-center">
        <Svg className="size-4"><circle cx="10" cy="6" r="5.300" strokeWidth="1.200" /><path d="M6.300 9.700L.6 15.400" strokeWidth="1.500" /></Svg>
      </button>
      <button aria-label="Widok zadań" className="mr-[3px] flex w-12 shrink-0 items-center justify-center">
        <Svg><path d="M.5 0v2.500h10V0M.5 4.500h10v7H.5zM.5 16v-2.500h10V16M14.500 0v16" /><path d="M13 4.500h3v3h-3z" fill="#fff" stroke="none" /></Svg>
      </button>
      <div className="flex flex-1 gap-px">
        {apps.map((app) => (
          <button
            key={app.name}
            aria-label={app.name}
            className={`flex w-12 shrink-0 flex-col items-center ${app.mark === 'active' ? 'bg-[#51636b]' : ''}`}
          >
            <span className="flex flex-1 items-center">
              <Svg className="size-6" box="0 0 24 24">{app.art}</Svg>
            </span>
            {app.mark ? (
              <span className={`flex h-0.5 bg-[#76c3f5] ${app.mark === 'active' ? 'w-12' : 'w-10'}`}>
                {app.mark === 'many' && <span className="ml-auto h-0.5 w-[9px] bg-[#4a8db2]" />}
              </span>
            ) : (
              <span className="h-0.5" />
            )}
          </button>
        ))}
      </div>
      <div className="flex items-center">
        <button aria-label="Ukryte ikony">
          <Svg className="size-3" box="0 0 12 12"><path d="M.5 9L6 3.500 11.500 9" strokeWidth="1.300" /></Svg>
        </button>
        <span className="ml-2.5"><Svg><path d="M5.500 4.500h9v7h-9M15.500 6.500v3" strokeWidth="1.200" /><path d="M7 6h6v4H7z" fill="#fff" stroke="none" /><path d="M1 2v2M4 2v2M.5 4.500h4v2l-2 1.500-2-1.500zM2.500 8v3.500h3" /></Svg></span>
        <SpeakerIcon className="ml-2 size-4" />
        <div className="ml-2 w-[60px] text-center text-[12px] leading-[18px]">
          <div>23:38</div>
          <div>23.02.2020</div>
        </div>
        <button aria-label="Powiadomienia" className="relative ml-4 flex w-8 items-center">
          <Svg className="h-[17px] w-4" box="0 0 16 17"><path d="M0 0h16v13h-5l-3 3v-3H0z" fill="#fff" stroke="none" /><path d="M3 3.500h10M3 6.500h10M3 9.500h7" stroke="#1c2b47" /></Svg>
          <span className="absolute left-[7px] top-1.5 flex size-[17px] items-center justify-center rounded-full border border-[#999] bg-[#3c4043] text-[11px] font-semibold leading-none">8</span>
        </button>
        <div className="ml-1 h-10 w-px bg-[#7b8496]" />
        <div className="w-[3px]" />
      </div>
    </footer>
  );
}

export default function App() {
  return (
    <div className="flex h-screen flex-col overflow-hidden bg-[#111] font-['Noto_Sans','Open_Sans',sans-serif]">
      <svg width="0" height="0" className="absolute" aria-hidden="true">
        <linearGradient id="face" x1="0" y1="0" x2="1" y2="1">
          <stop offset="0" stopColor="#ffea4d" />
          <stop offset="1" stopColor="#ffb400" />
        </linearGradient>
      </svg>
      <TabStrip />
      <Toolbar />
      <div className="flex min-h-0 flex-1">
        <Forum />
        <Scrollbar />
      </div>
      <Taskbar />
    </div>
  );
}
